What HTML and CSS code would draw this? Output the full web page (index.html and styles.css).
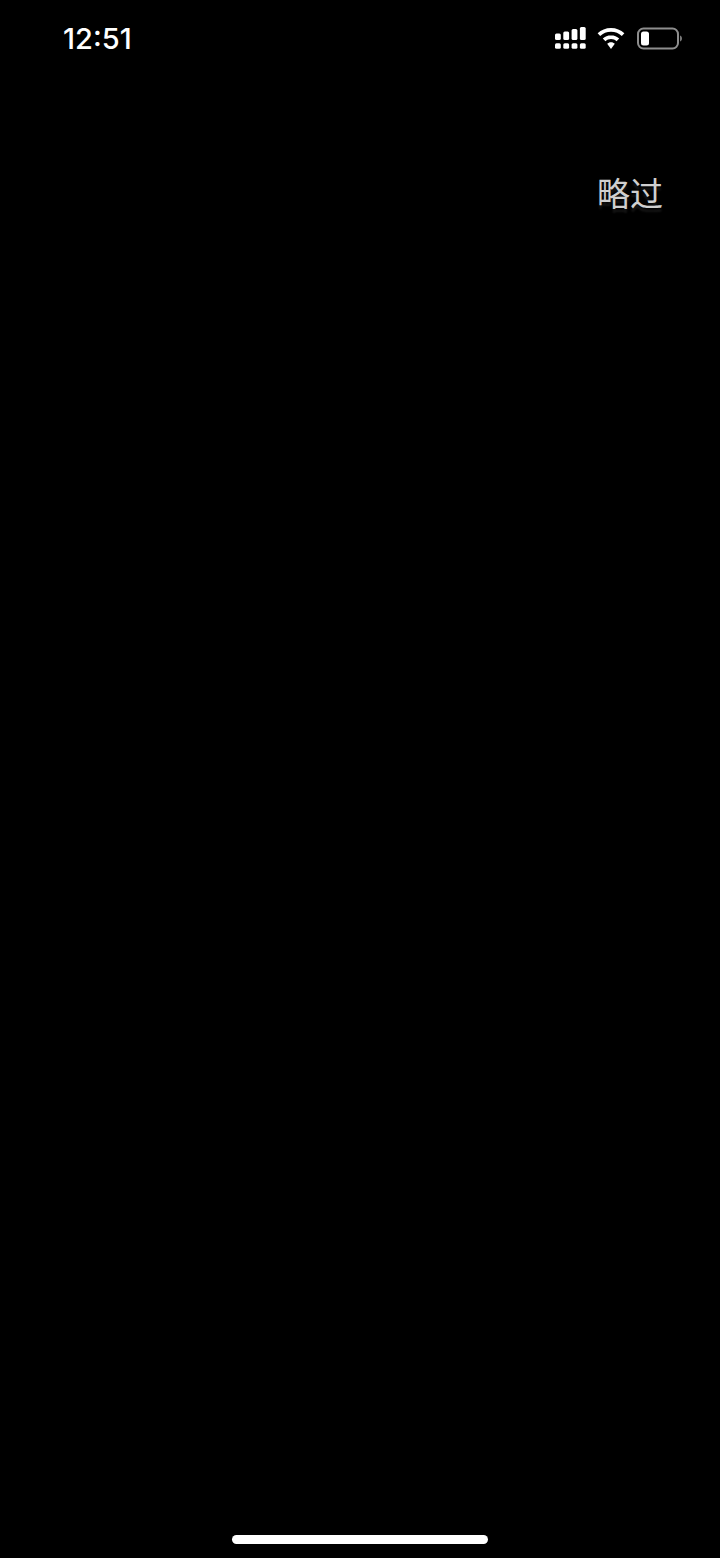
FILE: index.html
```html
<!DOCTYPE html>
<html lang="zh">
<head>
<meta charset="utf-8">
<title>略过</title>
<link rel="stylesheet" href="styles.css">
</head>
<body>
<div class="screen">
  <header class="status-bar">
    <span class="time">12:51</span>
    <div class="status-icons">
      <svg class="signal" width="31" height="22" viewBox="0 0 31 22" fill="#fff">
        <rect x="0" y="6.500" width="5.800" height="6.500" rx="1.500"/>
        <rect x="8.300" y="4.500" width="5.800" height="8.500" rx="1.500"/>
        <rect x="16.600" y="2" width="5.800" height="11" rx="1.500"/>
        <rect x="24.900" y="0" width="5.800" height="13" rx="1.500"/>
        <rect x="0" y="16.300" width="5.800" height="5.500" rx="1.500"/>
        <rect x="8.300" y="16.300" width="5.800" height="5.500" rx="1.500"/>
        <rect x="16.600" y="16.300" width="5.800" height="5.500" rx="1.500"/>
        <rect x="24.900" y="16.300" width="5.800" height="5.500" rx="1.500"/>
      </svg>
      <svg class="wifi" width="28" height="21" viewBox="0 0 29 22" fill="#fff">
        <path d="M14.500 0C9 0 4.200 2 .5 5.600l2.700 2.900C6.200 5.600 10.100 4 14.500 4s8.300 1.600 11.300 4.500l2.700-2.900C24.800 2 20 0 14.500 0z"/>
        <path d="M14.500 7.500c-3.400 0-6.400 1.300-8.600 3.500l2.800 2.900c1.500-1.500 3.500-2.400 5.800-2.400s4.300.9 5.800 2.400l2.800-2.900c-2.200-2.200-5.200-3.500-8.600-3.500z"/>
        <path d="M14.500 15c-1.600 0-3 .6-4 1.600l4 5.400 4-5.400c-1-1-2.400-1.600-4-1.600z"/>
      </svg>
      <svg class="battery" width="46" height="23" viewBox="0 0 46 23">
        <rect x="1" y="1.500" width="40" height="20" rx="5.500" fill="none" stroke="#8e8e8e" stroke-width="2"/>
        <rect x="4" y="4.500" width="8" height="14" rx="2.500" fill="#fff"/>
        <path d="M43 8.500v6c1.500-.5 2-1.700 2-3s-.5-2.500-2-3z" fill="#777"/>
      </svg>
    </div>
  </header>
  <div class="skip-row">
    <span class="skip">略过</span>
  </div>
  <div class="spacer"></div>
  <div class="home-row">
    <div class="home-indicator"></div>
  </div>
</div>
</body>
</html>
```
FILE: styles.css
```css
* {
  box-sizing: border-box;
}

html,
body {
  margin: 0;
  height: 100%;
  background: #000;
}

.screen {
  display: flex;
  flex-direction: column;
  height: 1558px;
  background: #000;
  overflow: hidden;
}

.status-bar {
  display: flex;
  align-items: center;
  justify-content: space-between;
  height: 76px;
  padding: 0 37px 0 63px;
}

.time {
  margin-top: 2px;
  font-family: Inter, "Liberation Sans", sans-serif;
  font-size: 29px;
  font-weight: 500;
  line-height: 32px;
  color: #fff;
}

.status-icons {
  display: flex;
  align-items: center;
  gap: 11px;
}

.battery {
  margin-left: 1px;
}

.skip-row {
  display: flex;
  justify-content: flex-end;
  padding: 96px 57px 0 0;
}

.skip {
  font-family: "Noto Sans CJK SC", sans-serif;
  font-size: 33px;
  line-height: 40px;
  color: #cfcfcf;
  text-shadow: 0 4px 2px rgba(255, 255, 255, 0.08);
}

.spacer {
  flex: 1;
}

.home-row {
  display: flex;
  justify-content: center;
  padding-bottom: 14px;
}

.home-indicator {
  width: 256px;
  height: 9px;
  border-radius: 5px;
  background: #fff;
}
```
